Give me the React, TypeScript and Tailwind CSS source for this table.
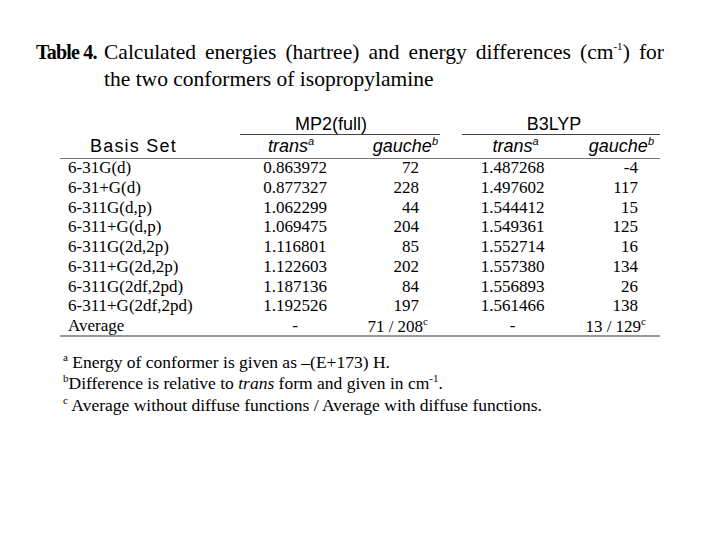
const rows: [string, string, string, string, string][] = [
  ["6-31G(d)", "0.863972", "72", "1.487268", "-4"],
  ["6-31+G(d)", "0.877327", "228", "1.497602", "117"],
  ["6-311G(d,p)", "1.062299", "44", "1.544412", "15"],
  ["6-311+G(d,p)", "1.069475", "204", "1.549361", "125"],
  ["6-311G(2d,2p)", "1.116801", "85", "1.552714", "16"],
  ["6-311+G(2d,2p)", "1.122603", "202", "1.557380", "134"],
  ["6-311G(2df,2pd)", "1.187136", "84", "1.556893", "26"],
  ["6-311+G(2df,2pd)", "1.192526", "197", "1.561466", "138"],
];

const serif = "font-['Liberation_Serif','Times_New_Roman',serif]";
const sans = "font-['Liberation_Sans',Arial,sans-serif]";
const cols = "grid grid-cols-[180px_110px_90px_22px_113px_85px]";

function Sup({ children, italic }: { children: string; italic?: boolean }) {
  return (
    <span className={`text-[11px] leading-none align-[7px] ${italic ? "italic" : ""}`}>{children}</span>
  );
}

export default function App() {
  return (
    <div className={`w-[720px] h-[540px] bg-white text-black ${serif} pt-[39px]`}>
      {/* caption */}
      <div className="flex pl-[36px] text-[21.5px] leading-[27px]">
        <div className="font-bold w-[68px] shrink-0 whitespace-nowrap text-[20px] tracking-[-0.8px]">Table 4.</div>
        <div className="w-[560px]">
          <div className="flex justify-between">
            {"Calculated energies (hartree) and energy differences".split(" ").map((w) => (
              <span key={w}>{w}</span>
            ))}
            <span>
              (cm<span className="text-[11px] leading-none align-[9px]">-1</span>)
            </span>
            <span>for</span>
          </div>
          <div>the two conformers of isopropylamine</div>
        </div>
      </div>

      {/* table */}
      <div className="ml-[60px] w-[600px] mt-[21px]">
        <div className={`${cols} ${sans} text-[18px] leading-[20px]`}>
          <div />
          <div className="col-span-2 text-center pr-[18px] border-b border-[#444]">MP2(full)</div>
          <div />
          <div className="col-span-2 text-center border-b border-[#444] pr-[14px]">B3LYP</div>
        </div>
        <div className={`${cols} ${sans} text-[18px] leading-[20px] pt-[1px] pb-[2px] border-b border-[#777]`}>
          <div className="pl-[30px] tracking-[1.2px]">Basis Set</div>
          <div className="text-center italic pr-[8px]">
            trans<Sup>a</Sup>
          </div>
          <div className="text-right italic pr-[2px]">
            gauche<Sup italic>b</Sup>
          </div>
          <div />
          <div className="text-center italic pr-[6px]">
            trans<Sup>a</Sup>
          </div>
          <div className="text-right italic pr-[6px]">
            gauche<Sup italic>b</Sup>
          </div>
        </div>
        <div className="text-[17px] leading-[19.75px] -mt-[1px] border-b-2 border-[#999]">
          {rows.map((r) => (
            <div key={r[0]} className={cols}>
              <div className="pl-[8px]">{r[0]}</div>
              <div className="text-center">{r[1]}</div>
              <div className="text-right pr-[21px]">{r[2]}</div>
              <div />
              <div className="text-center pr-[12px]">{r[3]}</div>
              <div className="text-right pr-[22px]">{r[4]}</div>
            </div>
          ))}
          <div className={`${cols} -mb-[2px]`}>
            <div className="pl-[8px]">Average</div>
            <div className="text-center">-</div>
            <div className="text-right pr-[12px] whitespace-nowrap">
              71 / 208<Sup>c</Sup>
            </div>
            <div />
            <div className="text-center pr-[12px]">-</div>
            <div className="text-right pr-[14px] whitespace-nowrap">
              13 / 129<Sup>c</Sup>
            </div>
          </div>
        </div>
      </div>

      {/* footnotes */}
      <div className="ml-[63px] mt-[15px] text-[17.5px] leading-[21.5px]">
        <div>
          <Sup>a</Sup> Energy of conformer is given as –(E+173) H.
        </div>
        <div>
          <Sup>b</Sup>Difference is relative to <span className="italic">trans</span> form and given in cm
          <Sup>-1</Sup>.
        </div>
        <div>
          <Sup>c</Sup> Average without diffuse functions / Average with diffuse functions.
        </div>
      </div>
    </div>
  );
}
